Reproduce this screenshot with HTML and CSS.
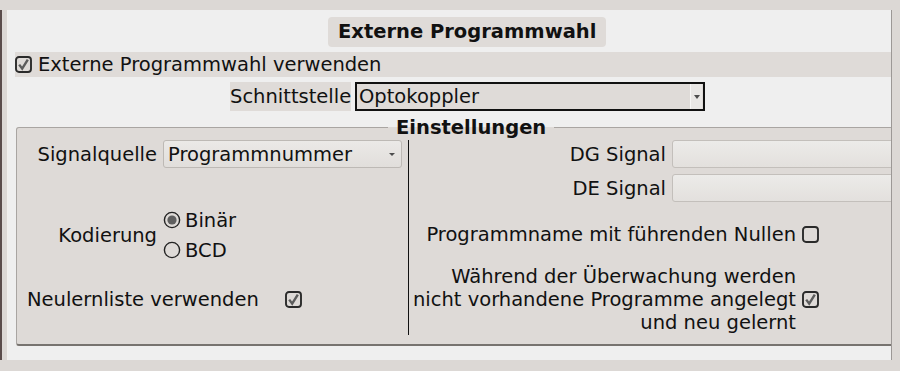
FILE: index.html
```html
<!DOCTYPE html>
<html lang="de">
<head>
    <meta charset="UTF-8">
    <title>Externe Programmwahl</title>
    <link rel="stylesheet" href="styles.css">
</head>
<body>
    <div class="topbar"></div>
    <div class="window">
        <div class="edge"></div>
        <div class="main">
            <!-- Titel -->
            <div class="title-row">
                <span class="title">Externe Programmwahl</span>
            </div>

            <div class="use-row">
                <svg class="check" width="17" height="17" viewBox="0 0 17 17">
                    <rect x="1" y="1" width="15" height="15" rx="3" fill="none" stroke="#2a2a2a" stroke-width="1.9"/>
                    <path d="M4.2 8.6 L7.2 12.6 L12.8 3.6" fill="none" stroke="#5c5c5c" stroke-width="2.4"/>
                </svg>
                <span>Externe Programmwahl verwenden</span>
            </div>

            <div class="iface-row">
                <span class="iface-label">Schnittstelle</span>
                <div class="iface-select">
                    <span>Optokoppler</span>
                    <span class="iface-btn"><span class="arrow"></span></span>
                </div>
            </div>

            <!-- Einstellungen -->
            <fieldset class="group">
                <legend>Einstellungen</legend>
                <div class="cols">
                    <div class="col-left">
                        <div class="form-row first">
                            <span class="label">Signalquelle</span>
                            <div class="combo">
                                <span>Programmnummer</span>
                                <span class="arrow"></span>
                            </div>
                        </div>
                        <div class="form-row coding">
                            <span class="label">Kodierung</span>
                            <div class="radios">
                                <div class="radio-item">
                                    <svg width="18" height="18" viewBox="0 0 18 18">
                                        <circle cx="9" cy="9" r="7.6" fill="none" stroke="#222" stroke-width="1.4"/>
                                        <circle cx="9" cy="9" r="4.6" fill="#5f5f5f"/>
                                    </svg>
                                    <span>Binär</span>
                                </div>
                                <div class="radio-item">
                                    <svg width="18" height="18" viewBox="0 0 18 18">
                                        <circle cx="9" cy="9" r="7.6" fill="none" stroke="#222" stroke-width="1.4"/>
                                    </svg>
                                    <span>BCD</span>
                                </div>
                            </div>
                        </div>
                        <div class="relearn-row">
                            <span class="relearn-label">Neulernliste verwenden</span>
                            <svg class="check" width="17" height="17" viewBox="0 0 17 17">
                                <rect x="1" y="1" width="15" height="15" rx="3" fill="none" stroke="#2a2a2a" stroke-width="1.9"/>
                                <path d="M4.2 8.6 L7.2 12.6 L12.8 3.6" fill="none" stroke="#5c5c5c" stroke-width="2.4"/>
                            </svg>
                        </div>
                    </div>

                    <div class="sep"></div>

                    <div class="col-right">
                        <div class="form-row first">
                            <span class="label wide">DG Signal</span>
                            <div class="field"></div>
                        </div>
                        <div class="form-row second">
                            <span class="label wide">DE Signal</span>
                            <div class="field"></div>
                        </div>
                        <div class="check-row zeros">
                            <span class="check-text">Programmname mit führenden Nullen</span>
                            <svg class="check" width="17" height="17" viewBox="0 0 17 17">
                                <rect x="1" y="1" width="15" height="15" rx="3" fill="none" stroke="#2a2a2a" stroke-width="1.9"/>
                            </svg>
                        </div>
                        <div class="check-row monitor">
                            <span class="check-text">Während der Überwachung werden<br>nicht vorhandene Programme angelegt<br>und neu gelernt</span>
                            <svg class="check" width="17" height="17" viewBox="0 0 17 17">
                                <rect x="1" y="1" width="15" height="15" rx="3" fill="none" stroke="#2a2a2a" stroke-width="1.9"/>
                                <path d="M4.2 8.6 L7.2 12.6 L12.8 3.6" fill="none" stroke="#5c5c5c" stroke-width="2.4"/>
                            </svg>
                        </div>
                    </div>
                </div>
            </fieldset>
        </div>
    </div>
    <div class="bottombar"></div>
</body>
</html>
```

FILE: styles.css
```css
/* Fenster */
body {
    margin: 0;
    width: 900px;
    height: 371px;
    overflow: hidden;
    background-color: #dcd8d5;
    font-family: "DejaVu Sans", sans-serif;
    font-size: 19.5px;
    color: #111;
}

.topbar {
    height: 10px;
    background-color: #dcd8d5;
}

.window {
    display: flex;
    height: 350px;
}

.edge {
    width: 5px;
    border-left: 2px solid #5a4c4b;
    border-right: 1px solid #f2f0ee;
}

.main {
    width: 883px;
    height: 350px;
    background-color: #efefef;
    border-right: 1px solid #9c9896;
    overflow: hidden;
}

.bottombar {
    height: 11px;
    background-color: #dcd8d5;
}

/* Titel */
.title-row {
    padding: 7px 0 0 320px;
}

.title {
    display: inline-block;
    height: 30px;
    line-height: 30px;
    padding: 0 10px;
    background-color: #dfdbd8;
    border-radius: 4px;
    font-weight: bold;
}

.use-row {
    display: flex;
    align-items: center;
    gap: 6px;
    height: 25px;
    margin: 5px 0 0 7px;
    background-color: #dfdbd8;
}

.check {
    flex: none;
    display: block;
}

.iface-row {
    display: flex;
    align-items: center;
    gap: 4px;
    margin-top: 5px;
    padding-left: 222px;
}

.iface-label {
    width: 121px;
    height: 29px;
    line-height: 29px;
    white-space: nowrap;
    overflow: hidden;
    background-color: #dfdbd8;
}

.iface-select {
    display: flex;
    align-items: center;
    justify-content: space-between;
    box-sizing: border-box;
    width: 350px;
    height: 29px;
    padding-left: 2px;
    border: 2px solid #111;
    background-color: #dfdbd8;
}

.iface-btn {
    display: flex;
    align-items: center;
    justify-content: center;
    width: 11px;
    height: 25px;
    margin-right: 1px;
    background-color: #e9e7e5;
    border-left: 1px solid #f7f6f5;
}

.arrow {
    width: 0;
    height: 0;
    border-left: 3.5px solid transparent;
    border-right: 3.5px solid transparent;
    border-top: 4px solid #4d4d4d;
}

/* Gruppe Einstellungen */
.group {
    width: 920px;
    height: 230px;
    box-sizing: border-box;
    margin: 5px 0 0 8px;
    padding: 0;
    border: 1px solid #a9a5a2;
    border-bottom: 2px solid #77736f;
    border-radius: 3px;
    background-color: #dedad7;
}

.group legend {
    margin-left: 371px;
    padding: 0 8px;
    font-weight: bold;
    line-height: 23px;
}

.cols {
    display: flex;
    height: 205px;
}

.col-left {
    width: 391px;
}

.sep {
    width: 1px;
    height: 195px;
    margin-top: 1px;
    background-color: #111;
}

.col-right {
    flex: 1;
}

.form-row {
    display: flex;
    align-items: center;
    gap: 6px;
}

.form-row.first {
    margin-top: 1px;
}

.form-row.second {
    margin-top: 6px;
}

.label {
    width: 140px;
    text-align: right;
}

.label.wide {
    width: 257px;
}

.combo {
    display: flex;
    align-items: center;
    justify-content: space-between;
    box-sizing: border-box;
    width: 239px;
    height: 28px;
    padding: 0 6px 0 4px;
    border: 1px solid #bdb9b5;
    border-radius: 3px;
    background: linear-gradient(#ebe9e7, #e1dedb);
}

.combo .arrow {
    border-left-width: 3px;
    border-right-width: 3px;
    border-top-width: 3px;
}

.field {
    box-sizing: border-box;
    width: 260px;
    height: 28px;
    border: 1px solid #c3bfbb;
    border-radius: 3px;
    background: linear-gradient(#ecebe9, #e3e0dd);
}

.coding {
    margin-top: 37px;
}

.radios {
    display: flex;
    flex-direction: column;
}

.radio-item {
    display: flex;
    align-items: center;
    gap: 4px;
    height: 30px;
}

.radio-item svg {
    display: block;
}

.relearn-row {
    display: flex;
    align-items: center;
    height: 25px;
    margin-top: 22px;
    padding-left: 10px;
}

.relearn-label {
    width: 258px;
}

.check-row {
    display: flex;
    align-items: center;
    gap: 6px;
}

.check-text {
    width: 387px;
    text-align: right;
    line-height: 23px;
}

.zeros {
    margin-top: 21px;
}

.monitor {
    margin-top: 19px;
}
```
